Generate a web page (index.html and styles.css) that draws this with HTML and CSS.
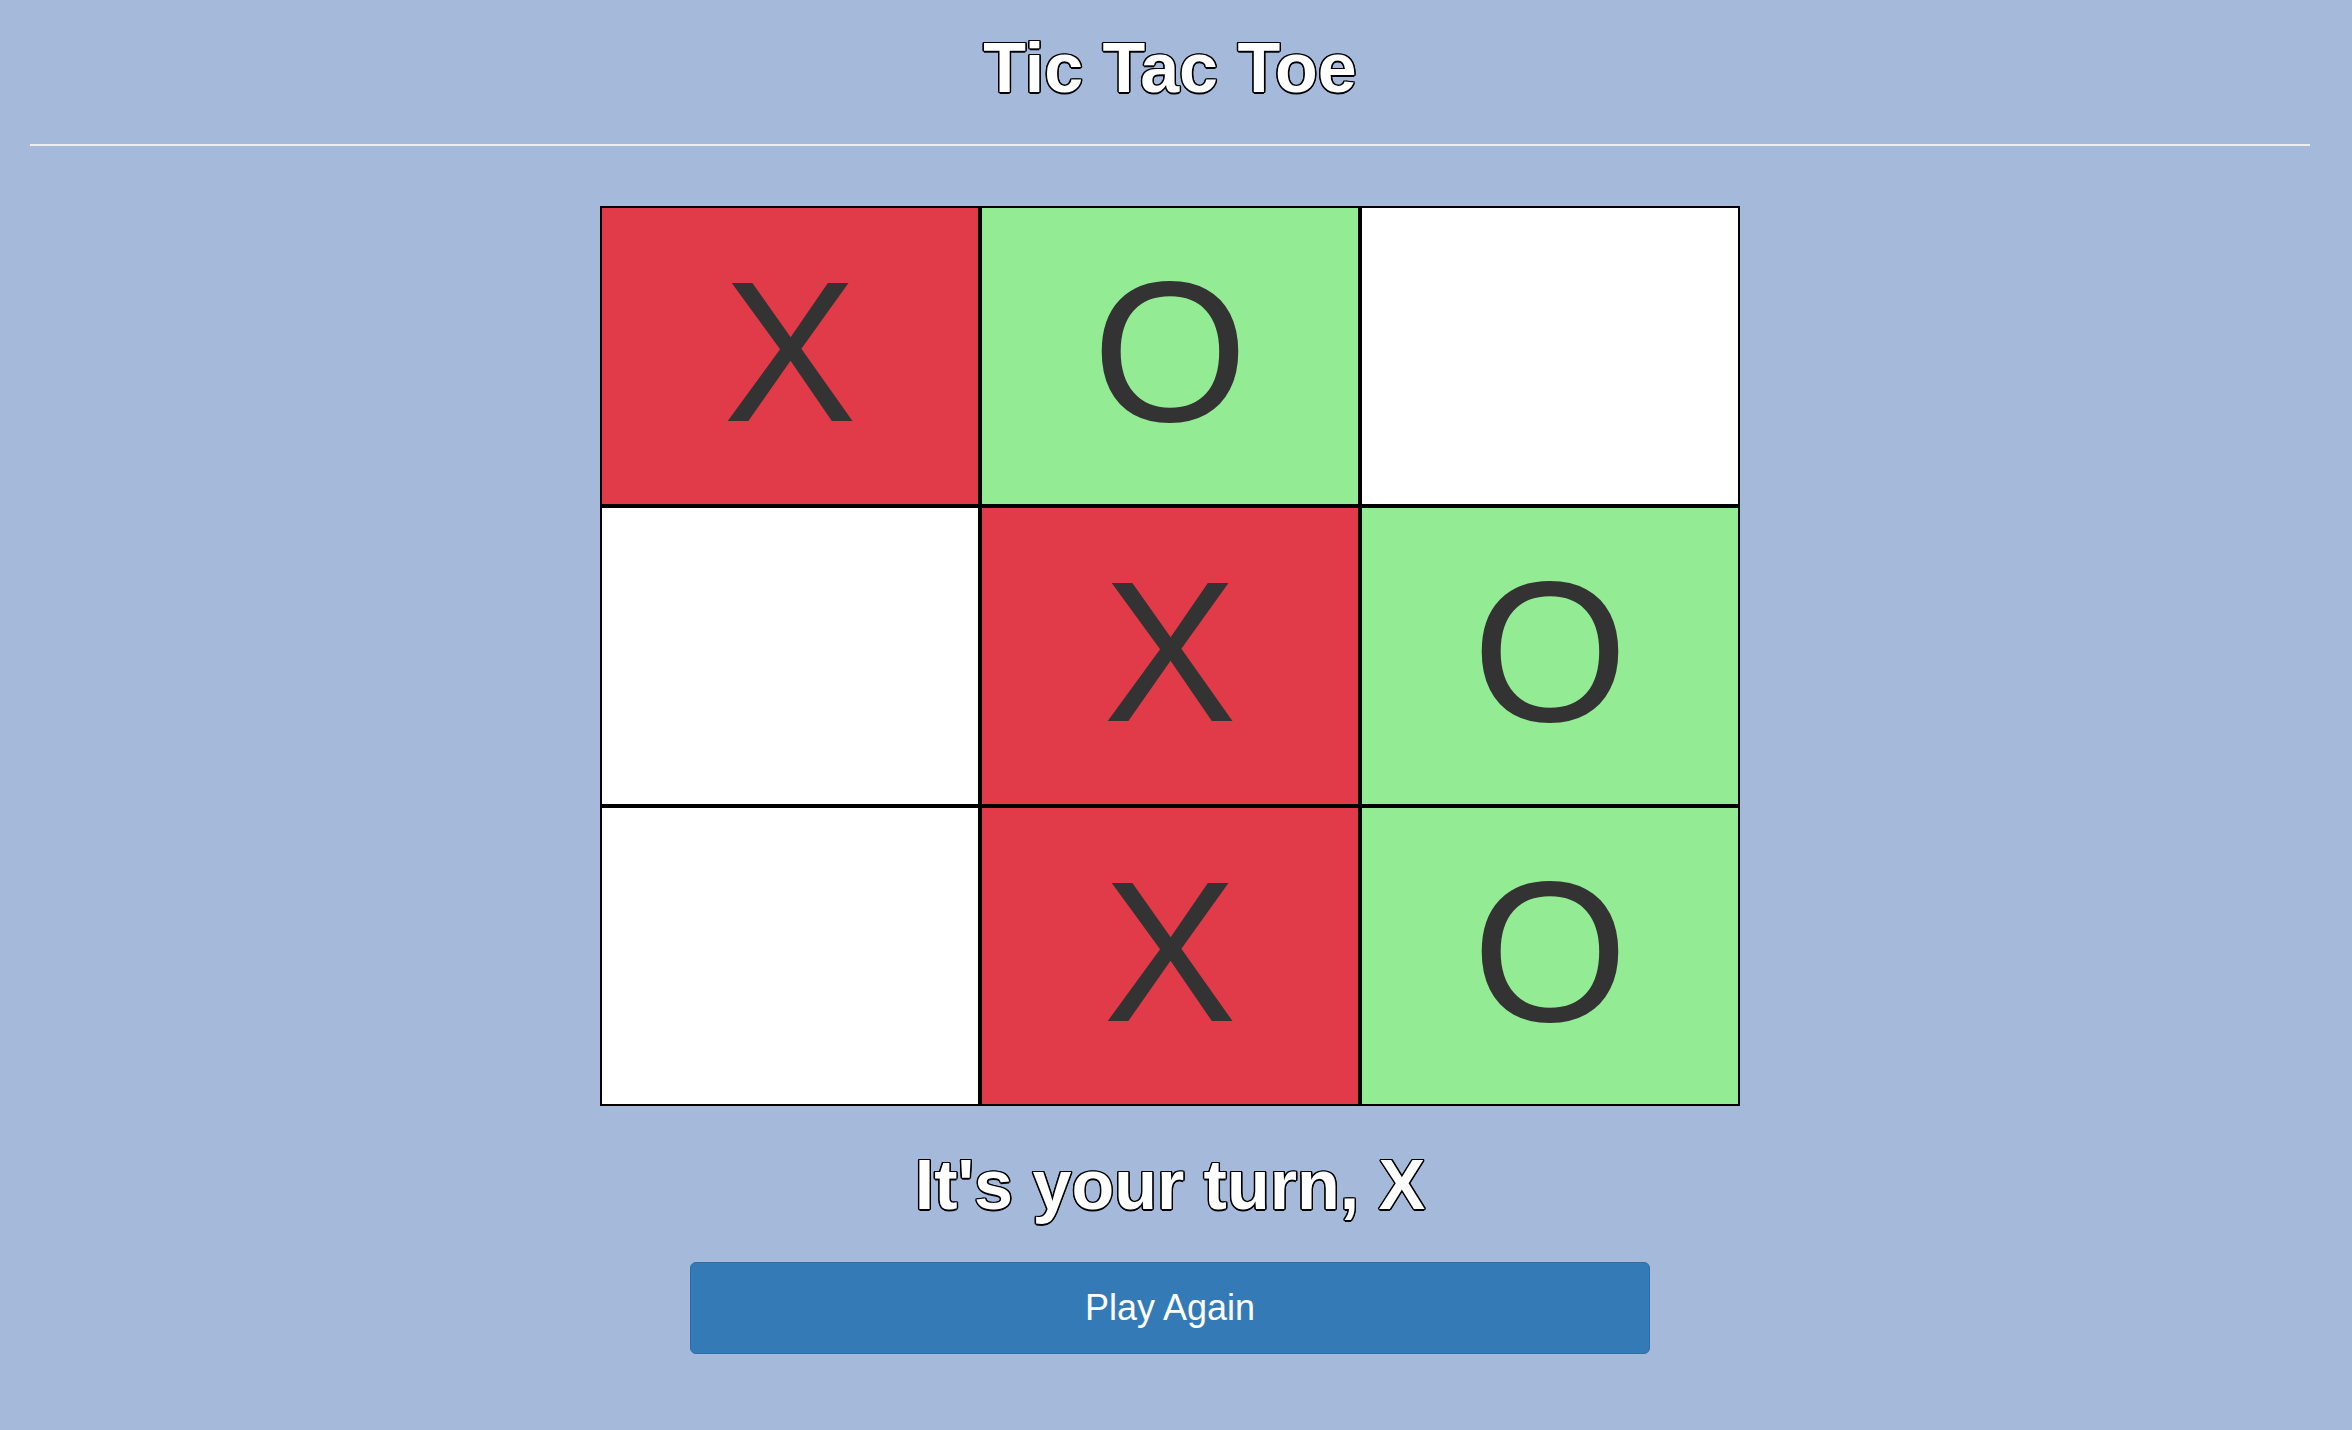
FILE: index.html
```html
<!DOCTYPE html>
<html lang="en">
<head>
<meta charset="utf-8">
<title>Tic Tac Toe</title>
<link rel="stylesheet" href="styles.css">
</head>
<body>
<div class="page">
  <h1 class="title">Tic Tac Toe</h1>
  <hr class="rule">
  <div class="board">
    <div class="cell cell-x">X</div>
    <div class="cell cell-o">O</div>
    <div class="cell"></div>
    <div class="cell"></div>
    <div class="cell cell-x">X</div>
    <div class="cell cell-o">O</div>
    <div class="cell"></div>
    <div class="cell cell-x">X</div>
    <div class="cell cell-o">O</div>
  </div>
  <h2 class="status">It's your turn, X</h2>
  <div class="actions">
    <button class="btn-again" type="button">Play Again</button>
  </div>
</div>
</body>
</html>
```
FILE: styles.css
```css
html, body {
  margin: 0;
  padding: 0;
}
body {
  background: #a5b9db;
  font-family: "Liberation Sans", Arial, Helvetica, sans-serif;
  color: #333;
  min-height: 1430px;
}
.page {
  padding: 33px 42px 0 30px;
}
.title,
.status {
  margin: 0;
  font-size: 70px;
  line-height: 70px;
  font-weight: bold;
  text-align: center;
  color: #fff;
  text-shadow:
    -1.2px -1.2px 0 #000,
    1.2px -1.2px 0 #000,
    -1.2px 1.2px 0 #000,
    1.2px 1.2px 0 #000,
    0 -1.5px 0 #000,
    0 1.5px 0 #000,
    -1.5px 0 0 #000,
    1.5px 0 0 #000;
}
.rule {
  margin: 41px 0 0 0;
  border: 0;
  height: 2px;
  background: #eeeeee;
}
.board {
  margin: 60px auto 0 auto;
  display: grid;
  grid-template-columns: repeat(3, 380px);
  grid-template-rows: repeat(3, 300px);
  width: 1140px;
}
.cell {
  box-sizing: border-box;
  border: 2px solid #000;
  background: #fff;
  display: flex;
  align-items: center;
  justify-content: center;
  padding-bottom: 8px;
  font-size: 200px;
  line-height: 1;
  color: #333;
}
.cell-x {
  background: #e13a48;
}
.cell-o {
  background: #93eb93;
}
.status {
  margin-top: 44px;
}
.actions {
  display: flex;
  justify-content: center;
  margin-top: 42px;
}
.btn-again {
  width: 960px;
  height: 92px;
  box-sizing: border-box;
  border: 1px solid #2e6da4;
  border-radius: 6px;
  background: #337ab7;
  color: #fff;
  font-family: "Liberation Sans", Arial, Helvetica, sans-serif;
  font-size: 36px;
  cursor: pointer;
}
```
